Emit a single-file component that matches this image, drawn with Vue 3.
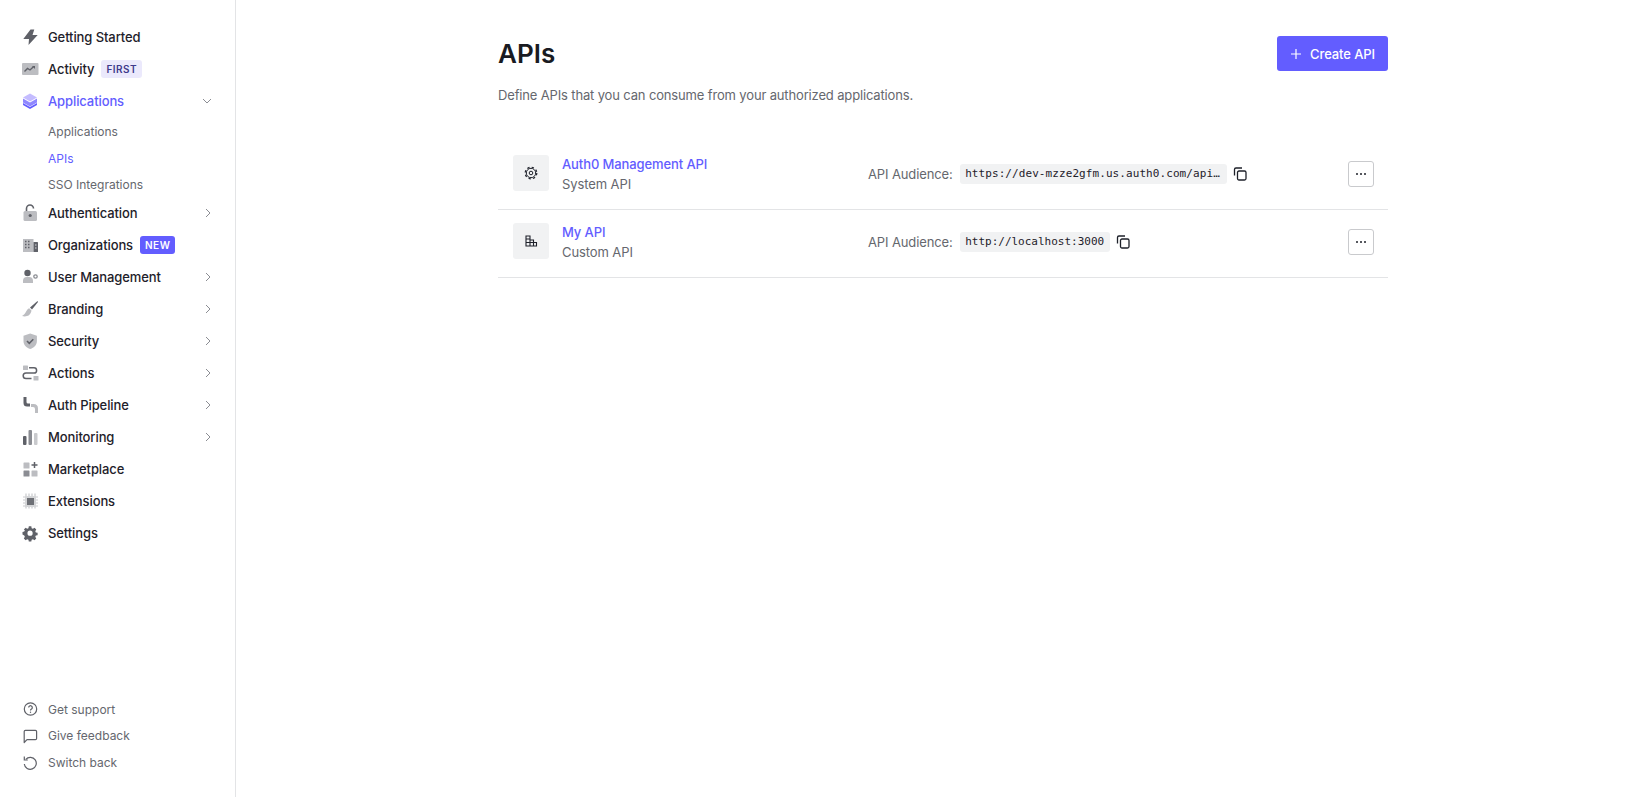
<script setup>
const navItems = [
  { label: 'Getting Started', icon: '<path d="M9.500 1.500 2.300 11H8l-.5 6 9.200-10h-5.200l1.800-5.500z" fill="#5f6168"/>' },
  { label: 'Activity', tag: 'FIRST', tagClass: 'tag-first', icon: '<rect x="1" y="3" width="16.500" height="12" rx="1" fill="#bcbdc1"/><path d="m3.500 11.500 3-3 2.500 1.500 3.500-3.200" fill="none" stroke="#5f6168" stroke-width="1.400"/><path d="M11 6h3v3z" fill="#5f6168"/>' },
  {
    label: 'Applications',
    active: true,
    open: true,
    icon: '<path d="M9 1.500 16 5.500 9 9.500 2 5.500z" fill="#c4bcff"/><path d="M2 6.500 9 10.500 16 6.500V10.500L9 14.500 2 10.500z" fill="#8f87ff"/><path d="M2 11 9 15 16 11V13L9 17 2 13z" fill="#635dff"/>',
    children: [
      { label: 'Applications' },
      { label: 'APIs', active: true },
      { label: 'SSO Integrations' }
    ]
  },
  { label: 'Authentication', arrow: true, icon: '<rect x="2.500" y="7" width="13.500" height="10" rx="1.500" fill="#bcbdc1"/><path d="M5.500 7V4.500a3.500 3.500 0 0 1 7 0" fill="none" stroke="#5f6168" stroke-width="1.600"/><circle cx="9.200" cy="11.500" r="1.600" fill="#5f6168"/>' },
  { label: 'Organizations', tag: 'NEW', tagClass: 'tag-new', icon: '<rect x="2" y="3" width="10.500" height="13" fill="#bcbdc1"/><path d="M4 5.500h1.500M7 5.500h1.500M4 8.500h1.500M7 8.500h1.500M4 11.500h1.500M7 11.500h1.500" stroke="#5f6168" stroke-width="1.300"/><rect x="12.500" y="6" width="4.500" height="10" rx=".6" fill="#5f6168"/><path d="M14 9h1.500M14 12h1.500" stroke="#d8d8da" stroke-width="1.200"/>' },
  { label: 'User Management', arrow: true, icon: '<circle cx="6.500" cy="5" r="3.200" fill="#5f6168"/><path d="M2 15v-2.200A3.800 3.800 0 0 1 5.800 9h2.400A3.800 3.800 0 0 1 12 12.800V15z" fill="#bcbdc1"/><circle cx="14.500" cy="8.500" r="1.700" fill="none" stroke="#8b8d93" stroke-width="1.300"/>' },
  { label: 'Branding', arrow: true, icon: '<path d="M16.500 1 9 7.500 11 9.500 17 2z" fill="#5f6168"/><path d="M8.200 8.300c-3 .7-2.700 5.700-7.200 7.700 3.500 1 8.500.5 9.500-5.500z" fill="#bcbdc1"/>' },
  { label: 'Security', arrow: true, icon: '<path d="M9.200 1.500 2.500 3.800V9c0 4 2.800 6.700 6.700 8 3.900-1.300 6.700-4 6.700-8V3.800z" fill="#bcbdc1"/><path d="m6 9 2.300 2.300 4-4" fill="none" stroke="#5f6168" stroke-width="1.600"/>' },
  { label: 'Actions', arrow: true, icon: '<rect x="2" y="1.500" width="5" height="4.500" rx=".6" fill="#bcbdc1"/><rect x="12.500" y="12" width="5" height="4.500" rx=".6" fill="#bcbdc1"/><path d="M8 3.800h5a2.600 2.600 0 0 1 0 5.200H5a2.800 2.800 0 0 0 0 5.600h5.500" fill="none" stroke="#5f6168" stroke-width="1.500"/>' },
  { label: 'Auth Pipeline', arrow: true, icon: '<path d="M2.500 1h3v5q0 1.500 1.500 1.500H9v3H6Q2.500 10.500 2.500 7z" fill="#5f6168"/><path d="M10 8h2.500Q17 8 17 12.500V17h-3v-4q0-2-2-2h-2z" fill="#bcbdc1"/>' },
  { label: 'Monitoring', arrow: true, icon: '<rect x="2" y="8" width="3.500" height="9" rx="1" fill="#5f6168"/><rect x="7.500" y="2" width="3.500" height="15" rx="1" fill="#8b8d93"/><rect x="13" y="5" width="3.500" height="12" rx="1" fill="#c9cacd"/>' },
  { label: 'Marketplace', icon: '<rect x="2.500" y="2.500" width="6" height="6" rx=".6" fill="#bcbdc1"/><rect x="2.500" y="10.500" width="6" height="6" rx=".6" fill="#8b8d93"/><rect x="10.500" y="10.500" width="6" height="6" rx=".6" fill="#bcbdc1"/><path d="M13.500 2v6M10.500 5h6" stroke="#5f6168" stroke-width="1.500"/>' },
  { label: 'Extensions', icon: '<path d="M5 1.500v15M8 1.500v15M11 1.500v15M14 1.500v15M2 5h15M2 8h15M2 11h15M2 14h15" stroke="#c9cacd" stroke-width="1.200"/><rect x="4" y="4" width="11" height="11" fill="#d5d6d8"/><rect x="6" y="6" width="7" height="7" fill="#6e7076"/>' },
  { label: 'Settings', icon: '<g transform="translate(1.500 1.500) scale(.84)"><path fill-rule="evenodd" fill="#5f6168" d="M7.500 1h3l.4 2.200 1.500.7 1.900-1.200 2.100 2.100-1.200 1.900.7 1.500 2.100.4v3l-2.100.4-.7 1.500 1.200 1.900-2.100 2.100-1.900-1.200-1.500.7-.4 2.100h-3l-.4-2.100-1.500-.7-1.900 1.200-2.100-2.100 1.200-1.900-.7-1.500L0 10.600v-3l2.100-.4.700-1.500L1.600 4.800l2.100-2.100 1.900 1.200 1.500-.7zM9 6a3.100 3.100 0 1 0 0 6.200A3.100 3.100 0 0 0 9 6z"/></g>' }
]

const footerItems = [
  { label: 'Get support', icon: '<circle cx="9.500" cy="9" r="6.200" fill="none" stroke="#5f6168" stroke-width="1.200"/><path d="M7.700 7.500a1.800 1.800 0 1 1 2.800 1.500c-.7.400-1 .7-1 1.400" fill="none" stroke="#5f6168" stroke-width="1.200"/><circle cx="9.500" cy="12.200" r=".7" fill="#5f6168"/>' },
  { label: 'Give feedback', icon: '<path d="M3.200 15.500V4.500a1.200 1.200 0 0 1 1.200-1.200h10a1.200 1.200 0 0 1 1.200 1.200v7a1.200 1.200 0 0 1-1.200 1.200H6z" fill="none" stroke="#5f6168" stroke-width="1.200" stroke-linejoin="round"/>' },
  { label: 'Switch back', icon: '<path d="M4.800 5.300A6 6 0 1 1 3.300 10" fill="none" stroke="#5f6168" stroke-width="1.200"/><path d="M3.300 2.500v3.500h3.500" fill="none" stroke="#5f6168" stroke-width="1.200"/>' }
]

const apis = [
  { id: 1, name: 'Auth0 Management API', type: 'System API', audience: 'https://dev-mzze2gfm.us.auth0.com/api…', long: true, kind: 'system' },
  { id: 2, name: 'My API', type: 'Custom API', audience: 'http://localhost:3000', long: false, kind: 'custom' }
]
</script>

<template>
  <div class="layout">
    <aside class="sidebar">
      <nav class="nav">
        <template v-for="item in navItems" :key="item.label">
          <a class="nav-item" :class="{ active: item.active }">
            <svg class="nav-icon" width="18" height="18" viewBox="0 0 18 18" v-html="item.icon"></svg>
            <span>{{ item.label }}</span>
            <span v-if="item.tag" class="tag" :class="item.tagClass">{{ item.tag }}</span>
            <svg v-if="item.arrow" class="chevron" width="8" height="10" viewBox="0 0 8 10">
              <path d="m2 1 4 4-4 4" fill="none" stroke="#8b8d93" stroke-width="1" />
            </svg>
            <svg v-if="item.open" class="chevron" width="10" height="8" viewBox="0 0 10 8">
              <path d="m1 2 4 4 4-4" fill="none" stroke="#8b8d93" stroke-width="1" />
            </svg>
          </a>
          <div v-if="item.children" class="sub-nav">
            <a v-for="child in item.children" :key="child.label" class="sub-item" :class="{ active: child.active }">{{ child.label }}</a>
          </div>
        </template>
      </nav>
      <div class="sidebar-footer">
        <a v-for="item in footerItems" :key="item.label" class="footer-item">
          <svg class="nav-icon" width="18" height="18" viewBox="0 0 18 18" v-html="item.icon"></svg>
          <span>{{ item.label }}</span>
        </a>
      </div>
    </aside>

    <main class="main">
      <div class="content">
        <header class="page-head">
          <h1>APIs</h1>
          <button class="create-btn">
            <svg width="12" height="12" viewBox="0 0 12 12">
              <path d="M6 1v10M1 6h10" stroke="#fff" stroke-width="1.200" />
            </svg>
            Create API
          </button>
        </header>
        <p class="page-desc">Define APIs that you can consume from your authorized applications.</p>

        <div class="api-list">
          <div v-for="api in apis" :key="api.id" class="api-row">
            <div class="api-info">
              <div class="api-icon">
                <svg v-if="api.kind === 'system'" width="16" height="16" viewBox="0 0 16 16" fill="none" stroke="#1e212a">
                  <circle cx="8" cy="8" r="4.700" stroke-width="1" />
                  <circle cx="8" cy="8" r="5.800" stroke-width="1.200" stroke-dasharray="2.280 2.280" />
                  <circle cx="8" cy="8" r="1.800" stroke-width="1" />
                </svg>
                <svg v-else width="16" height="16" viewBox="0 0 16 16">
                  <path fill="none" stroke="#1e212a" stroke-width="1.100" d="M3 3h4v10H3zM7 7h3.500v6H7zM10.500 9.500H13.500v3.500h-3zM3 6h4M3 9.500h7.500" />
                </svg>
              </div>
              <div class="api-text">
                <a class="api-name">{{ api.name }}</a>
                <span class="api-type">{{ api.type }}</span>
              </div>
            </div>
            <div class="api-audience">
              <span class="audience-label">API Audience:</span>
              <code class="audience-code" :class="{ long: api.long }">{{ api.audience }}</code>
              <svg class="copy-icon" width="16" height="16" viewBox="0 0 16 16">
                <path d="M2.500 9.500V3.500a1.500 1.500 0 0 1 1.500-1.500h6" fill="none" stroke="#1e212a" stroke-width="1.300" />
                <rect x="5.500" y="5" width="8.500" height="9" rx="1.500" fill="none" stroke="#1e212a" stroke-width="1.300" />
              </svg>
            </div>
            <button class="more-btn" aria-label="More">
              <span></span><span></span><span></span>
            </button>
          </div>
        </div>
      </div>
    </main>
  </div>
</template>

<style>
html,
body {
  margin: 0;
  background: #fff;
}
</style>

<style scoped>
.layout {
  display: flex;
  min-height: 100vh;
  font-family: Inter, "Liberation Sans", sans-serif;
  color: #1e212a;
  font-size: 13px;
}

.sidebar {
  width: 236px;
  flex-shrink: 0;
  box-sizing: border-box;
  border-right: 1px solid #e3e4e6;
  padding: 21px 23px 21px 21px;
  display: flex;
  flex-direction: column;
  justify-content: space-between;
}

.nav-item {
  display: flex;
  align-items: center;
  height: 32px;
  font-size: 13px;
  font-weight: 500;
  letter-spacing: -0.1px;
}

.nav-item.active {
  color: #635dff;
}

.nav-icon {
  width: 18px;
  height: 18px;
  margin-right: 9px;
  flex-shrink: 0;
}

.chevron {
  margin-left: auto;
}

.tag {
  margin-left: 7px;
  padding: 0 5px;
  height: 18px;
  line-height: 18px;
  border-radius: 3px;
  font-size: 10px;
  font-weight: 600;
  letter-spacing: 0.5px;
}

.tag-first {
  background: #ebe9fc;
  color: #3f3a8c;
}

.tag-new {
  background: #635dff;
  color: #fff;
}

.sub-nav {
  display: flex;
  flex-direction: column;
  padding-left: 27px;
  padding-top: 2px;
  margin-bottom: -1.5px;
}

.sub-item {
  height: 26.5px;
  line-height: 26.5px;
  font-size: 12px;
  color: #65676e;
}

.sub-item.active {
  color: #635dff;
}

.sidebar-footer {
  display: flex;
  flex-direction: column;
}

.footer-item {
  display: flex;
  align-items: center;
  height: 26.8px;
  font-size: 12px;
  color: #65676e;
}

.main {
  flex: 1;
  display: flex;
  justify-content: center;
}

.content {
  width: 890px;
  padding-top: 36px;
}

.page-head {
  display: flex;
  justify-content: space-between;
  align-items: center;
  height: 35px;
}

h1 {
  margin: 0;
  font-size: 26px;
  font-weight: 600;
  color: #191b22;
}

.create-btn {
  display: flex;
  align-items: center;
  gap: 8px;
  height: 35px;
  width: 111px;
  justify-content: center;
  border: none;
  border-radius: 3px;
  background: #635dff;
  color: #fff;
  font-family: inherit;
  font-size: 13px;
  font-weight: 500;
  letter-spacing: -0.1px;
}

.page-desc {
  margin: 14px 0 0;
  line-height: 20px;
  font-size: 13px;
  letter-spacing: -0.15px;
  color: #65676e;
}

.api-list {
  margin-top: 36px;
}

.api-row {
  display: flex;
  align-items: center;
  box-sizing: border-box;
  height: 68.5px;
  border-bottom: 1px solid #e3e4e6;
  padding: 0 14px 2px 15px;
}

.api-info {
  display: flex;
  align-items: center;
  gap: 13px;
  width: 355px;
  flex-shrink: 0;
}

.api-icon {
  width: 36px;
  height: 36px;
  margin-bottom: 2px;
  border-radius: 3px;
  background: #f1f2f3;
  display: flex;
  align-items: center;
  justify-content: center;
}

.api-text {
  display: flex;
  flex-direction: column;
  line-height: 20px;
  font-size: 13px;
  letter-spacing: -0.1px;
}

.api-name {
  color: #635dff;
  font-weight: 500;
}

.api-type {
  color: #65676e;
}

.api-audience {
  flex: 1;
  display: flex;
  align-items: center;
  font-size: 13px;
  letter-spacing: -0.12px;
  color: #65676e;
}

.audience-code {
  margin-left: 7px;
  padding: 0 5.5px;
  height: 20px;
  line-height: 20px;
  border-radius: 3px;
  background: #f1f2f3;
  color: #1e212a;
  font-family: "DejaVu Sans Mono", "Liberation Mono", monospace;
  font-size: 11px;
  letter-spacing: 0;
  white-space: nowrap;
}

.audience-code.long {
  width: 256px;
  letter-spacing: 0.08px;
}

.copy-icon {
  margin-left: 5.5px;
  flex-shrink: 0;
}

.more-btn {
  width: 26px;
  height: 26px;
  padding: 0;
  border: 1px solid #c9cacd;
  border-radius: 3px;
  background: #fff;
  display: flex;
  align-items: center;
  justify-content: center;
  gap: 2px;
}

.more-btn span {
  width: 2px;
  height: 2px;
  border-radius: 50%;
  background: #1e212a;
}
</style>
